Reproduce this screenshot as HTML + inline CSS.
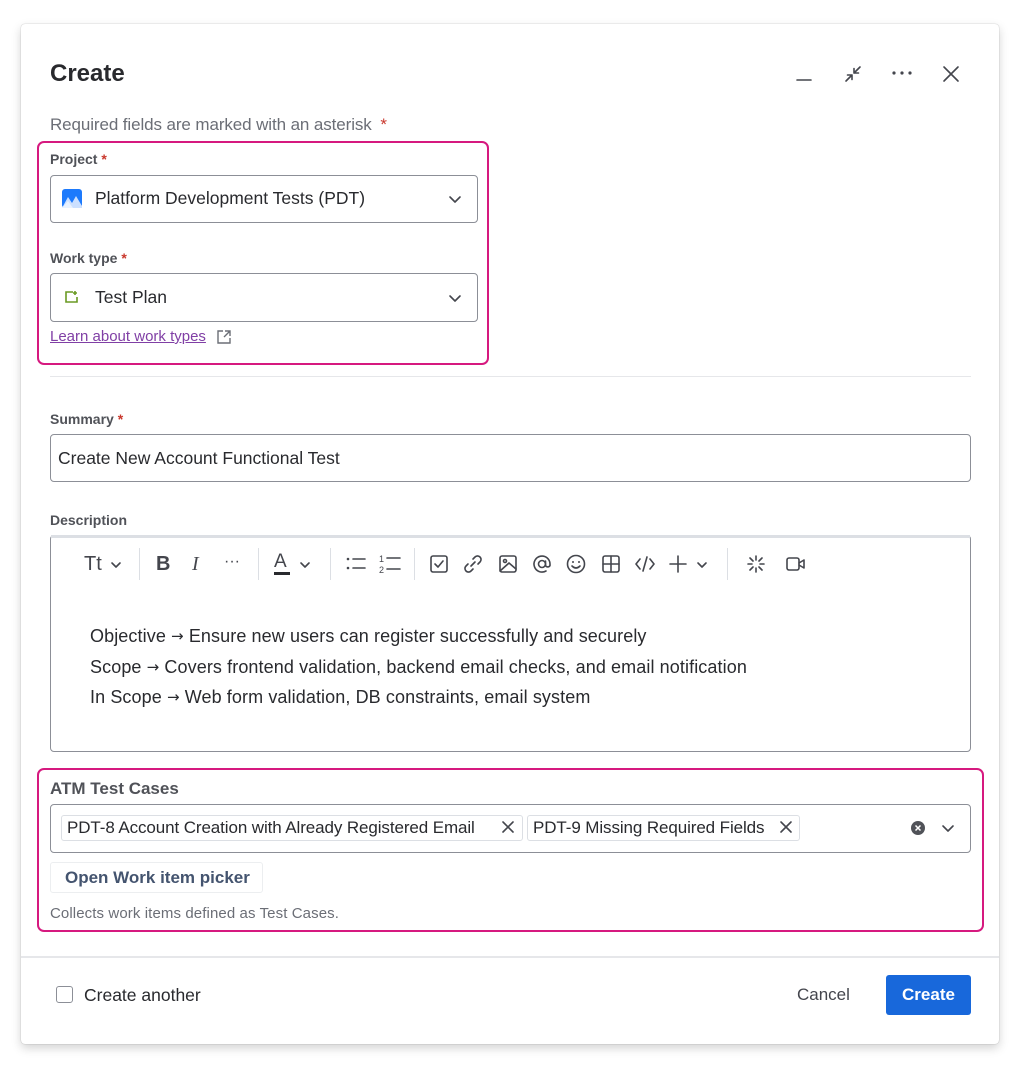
<!DOCTYPE html>
<html><head><meta charset="utf-8"><style>
*{box-sizing:border-box;margin:0;padding:0}
body{width:1020px;height:1070px;background:#fff;font-family:"Liberation Sans",sans-serif;color:#292a2e;position:relative;overflow:hidden}
.dlg{position:absolute;left:21px;top:24px;width:978px;height:1020px;background:#fff;border-radius:4px;box-shadow:0 0 1px rgba(0,0,0,.35),0 4px 10px rgba(0,0,0,.18)}
.a{position:absolute}
.lbl{font-size:14px;font-weight:bold;color:#505258}
.req{color:#c9372c}
.inp{position:absolute;border:1px solid #8c8f97;border-radius:4px;background:#fff}
.pink{position:absolute;border:2px solid #d6197f;border-radius:7px}
.chev{position:absolute;width:16px;height:16px}
svg{display:block}
.ic{stroke:#44464d;fill:none;stroke-width:1.6;stroke-linecap:round;stroke-linejoin:round}
.tag{position:absolute;top:10px;height:26px;border:1px solid #dcdfe4;border-radius:3px;background:#fff;font-size:17px;line-height:24px;padding-left:5px;color:#292a2e;white-space:nowrap;letter-spacing:-0.1px}
.ar{font-family:"DejaVu Sans",sans-serif;font-size:15px;position:relative;top:-1px}
</style></head><body>
<div class="dlg"></div>
<div class="a" style="left:50px;top:60px;font-size:24px;font-weight:bold;color:#292a2e">Create</div>
<svg class="a" style="left:795px;top:68px" width="18" height="16"><path d="M2 12H16" class="ic"/></svg>
<svg class="a" style="left:843px;top:64px" width="20" height="20"><path d="M3 17L9 11M9 11H4.5M9 11V15.5M17 3L11 9M11 9H15.5M11 9V4.5" class="ic"/></svg>
<svg class="a" style="left:890px;top:66px" width="24" height="14"><circle cx="4" cy="7" r="1.6" fill="#44464d"/><circle cx="12" cy="7" r="1.6" fill="#44464d"/><circle cx="20" cy="7" r="1.6" fill="#44464d"/></svg>
<svg class="a" style="left:941px;top:64px" width="20" height="20"><path d="M3 3L17 17M17 3L3 17" class="ic"/></svg>

<div class="a" style="left:50px;top:115px;font-size:17px;color:#6b6e76;letter-spacing:-0.1px">Required fields are marked with an asterisk <span class="req" style="margin-left:4px">*</span></div>

<div class="pink" style="left:37px;top:141px;width:452px;height:224px"></div>
<div class="a lbl" style="left:50px;top:151px">Project<span class="req"> *</span></div>
<div class="inp" style="left:50px;top:175px;width:428px;height:48px"></div>
<svg class="a" style="left:62px;top:189px" width="20" height="20"><rect width="20" height="19" rx="3" fill="#1d7afc"/><path d="M0 19L6 8L10 14L14 7L20 17V19Z" fill="#cce0ff"/><path d="M0 19L6 12L11 19Z" fill="#e9f2ff"/></svg>
<div class="a" style="left:95px;top:188px;font-size:17.5px">Platform Development Tests (PDT)</div>
<svg class="chev" style="left:447px;top:191px"><path d="M3 6L8 11L13 6" class="ic" stroke-width="1.5"/></svg>

<div class="a lbl" style="left:50px;top:250px">Work type<span class="req"> *</span></div>
<div class="inp" style="left:50px;top:273px;width:428px;height:49px"></div>
<svg class="a" style="left:64px;top:290px" width="16" height="14"><path d="M9 2H2V12H13V7M11 1V5M9 3H13" stroke="#6a9a23" fill="none" stroke-width="1.6"/></svg>
<div class="a" style="left:95px;top:287px;font-size:17.5px">Test Plan</div>
<svg class="chev" style="left:447px;top:290px"><path d="M3 6L8 11L13 6" class="ic" stroke-width="1.5"/></svg>
<div class="a" style="left:50px;top:328px;font-size:15px;color:#803fa5;text-decoration:underline">Learn about work types</div>
<svg class="a" style="left:216px;top:329px" width="16" height="16"><path d="M7 2H2V14H14V9M9 2H14V7M14 2L8 8" stroke="#6b6e76" fill="none" stroke-width="1.4"/></svg>

<div class="a" style="left:50px;top:376px;width:921px;height:1px;background:#e6e7ea"></div>

<div class="a lbl" style="left:50px;top:411px">Summary<span class="req"> *</span></div>
<div class="inp" style="left:50px;top:434px;width:921px;height:48px"></div>
<div class="a" style="left:58px;top:448px;font-size:17.5px">Create New Account Functional Test</div>

<div class="a lbl" style="left:50px;top:512px">Description</div>
<div class="inp" style="left:50px;top:535px;width:921px;height:217px"></div>
<div class="a" style="left:51px;top:535px;width:919px;height:3px;background:#dcdfe4"></div>
<div class="a" style="left:84px;top:553px;font-size:20px;color:#44464d">Tt</div>
<svg class="chev" style="left:109px;top:557px"><path d="M3 6L7 10L11 6" class="ic" stroke-width="1.3"/></svg>
<div class="a" style="left:139px;top:548px;width:1px;height:32px;background:#dcdfe4"></div>
<div class="a" style="left:156px;top:553px;font-size:20px;font-weight:bold;color:#44464d">B</div>
<div class="a" style="left:192px;top:553px;font-size:20px;font-style:italic;color:#44464d;font-family:'Liberation Serif',serif">I</div>
<div class="a" style="left:224px;top:553px;font-size:16px;color:#44464d">···</div>
<div class="a" style="left:258px;top:548px;width:1px;height:32px;background:#dcdfe4"></div>
<div class="a" style="left:274px;top:551px;font-size:19px;color:#44464d">A</div>
<div class="a" style="left:274px;top:572px;width:16px;height:3px;background:#292a2e"></div>
<svg class="chev" style="left:298px;top:557px"><path d="M3 6L7 10L11 6" class="ic" stroke-width="1.3"/></svg>
<div class="a" style="left:330px;top:548px;width:1px;height:32px;background:#dcdfe4"></div>
<svg class="a" style="left:345px;top:555px" width="22" height="18"><circle cx="3" cy="4" r="1.3" fill="#44464d"/><circle cx="3" cy="13" r="1.3" fill="#44464d"/><path d="M8 4H20M8 13H20" class="ic"/></svg>
<svg class="a" style="left:378px;top:553px" width="24" height="22"><text x="1" y="9" font-size="9" fill="#44464d" font-family="Liberation Sans">1</text><text x="1" y="20" font-size="9" fill="#44464d" font-family="Liberation Sans">2</text><path d="M9 5H22M9 16H22" class="ic"/></svg>
<div class="a" style="left:414px;top:548px;width:1px;height:32px;background:#dcdfe4"></div>
<svg class="a" style="left:429px;top:554px" width="20" height="20"><rect x="2" y="2" width="16" height="16" rx="2" class="ic"/><path d="M6 10L9 13L14 7" class="ic"/></svg>
<svg class="a" style="left:463px;top:554px" width="20" height="20"><path d="M8 12L12 8M10 5L12 3A3.5 3.5 0 0 1 17 8L15 10M10 15L8 17A3.5 3.5 0 0 1 3 12L5 10" class="ic"/></svg>
<svg class="a" style="left:498px;top:554px" width="20" height="20"><rect x="2" y="2" width="16" height="16" rx="2" class="ic"/><circle cx="7" cy="7" r="1.5" class="ic"/><path d="M2 17L11 9L18 15" class="ic"/></svg>
<svg class="a" style="left:531px;top:553px" width="22" height="22"><circle cx="11" cy="11" r="3.5" class="ic"/><path d="M14.5 8V12.5A2.5 2.5 0 0 0 19 12.5V11A8 8 0 1 0 15 18" class="ic"/></svg>
<svg class="a" style="left:565px;top:553px" width="22" height="22"><circle cx="11" cy="11" r="8.5" class="ic"/><circle cx="8" cy="9" r="1" fill="#44464d"/><circle cx="14" cy="9" r="1" fill="#44464d"/><path d="M7 13Q11 17 15 13" class="ic"/></svg>
<svg class="a" style="left:601px;top:554px" width="20" height="20"><rect x="2" y="2" width="16" height="16" rx="2" class="ic"/><path d="M10 2V18M2 10H18" class="ic"/></svg>
<svg class="a" style="left:634px;top:554px" width="22" height="20"><path d="M6 5L2 10L6 15M16 5L20 10L16 15M13 3L9 17" class="ic"/></svg>
<svg class="a" style="left:668px;top:554px" width="20" height="20"><path d="M10 2V18M2 10H18" class="ic"/></svg>
<svg class="chev" style="left:695px;top:557px"><path d="M3 6L7 10L11 6" class="ic" stroke-width="1.3"/></svg>
<div class="a" style="left:727px;top:548px;width:1px;height:32px;background:#dcdfe4"></div>
<svg class="a" style="left:746px;top:554px" width="20" height="20"><path d="M10 2V6M10 14V18M2 10H6M14 10H18M4 4L7 7M13 13L16 16M16 4L13 7M7 13L4 16" class="ic"/></svg>
<svg class="a" style="left:785px;top:555px" width="22" height="18"><rect x="2" y="3" width="12" height="12" rx="2" class="ic"/><path d="M14 8L19 5V13L14 10" class="ic"/></svg>
<div class="a" style="left:90px;top:622px;font-size:18px;line-height:29.5px;color:#292a2e;letter-spacing:0.1px;white-space:nowrap">Objective <span class="ar">→</span> Ensure new users can register successfully and securely<br>Scope <span class="ar">→</span> Covers frontend validation, backend email checks, and email notification<br>In Scope <span class="ar">→</span> Web form validation, DB constraints, email system</div>

<div class="pink" style="left:37px;top:768px;width:947px;height:164px"></div>
<div class="a" style="left:50px;top:779px;font-size:17px;font-weight:bold;color:#505258">ATM Test Cases</div>
<div class="inp" style="left:50px;top:804px;width:921px;height:49px">
<div class="tag" style="left:10px;width:462px">PDT-8 Account Creation with Already Registered Email</div>
<div class="tag" style="left:476px;width:273px">PDT-9 Missing Required Fields</div>
</div>
<svg class="a" style="left:501px;top:820px" width="14" height="14"><path d="M2 2L12 12M12 2L2 12" class="ic" stroke-width="1.4"/></svg>
<svg class="a" style="left:779px;top:820px" width="14" height="14"><path d="M2 2L12 12M12 2L2 12" class="ic" stroke-width="1.4"/></svg>
<svg class="a" style="left:910px;top:820px" width="16" height="16"><circle cx="8" cy="8" r="7" fill="#505258"/><path d="M5.5 5.5L10.5 10.5M10.5 5.5L5.5 10.5" stroke="#fff" stroke-width="1.5"/></svg>
<svg class="chev" style="left:940px;top:820px"><path d="M3 6L8 11L13 6" class="ic" stroke-width="1.5"/></svg>
<div class="a" style="left:50px;top:862px;width:213px;height:31px;border:1px solid #eceef0;border-radius:3px;background:#fff;font-size:17px;font-weight:bold;color:#44546f;line-height:29px;padding-left:14px">Open Work item picker</div>
<div class="a" style="left:50px;top:905px;font-size:15px;color:#6b6e76;letter-spacing:0.1px">Collects work items defined as Test Cases.</div>

<div class="a" style="left:21px;top:956px;width:978px;height:2px;background:#e6e7ea"></div>
<div class="a" style="left:56px;top:986px;width:17px;height:17px;border:1.5px solid #8c8f97;border-radius:3px"></div>
<div class="a" style="left:84px;top:985px;font-size:17.5px;color:#292a2e">Create another</div>
<div class="a" style="left:797px;top:985px;font-size:17px;color:#44464d">Cancel</div>
<div class="a" style="left:886px;top:975px;width:85px;height:40px;background:#1868db;border-radius:3px;color:#fff;font-size:17px;font-weight:bold;text-align:center;line-height:40px">Create</div>
</body></html>
